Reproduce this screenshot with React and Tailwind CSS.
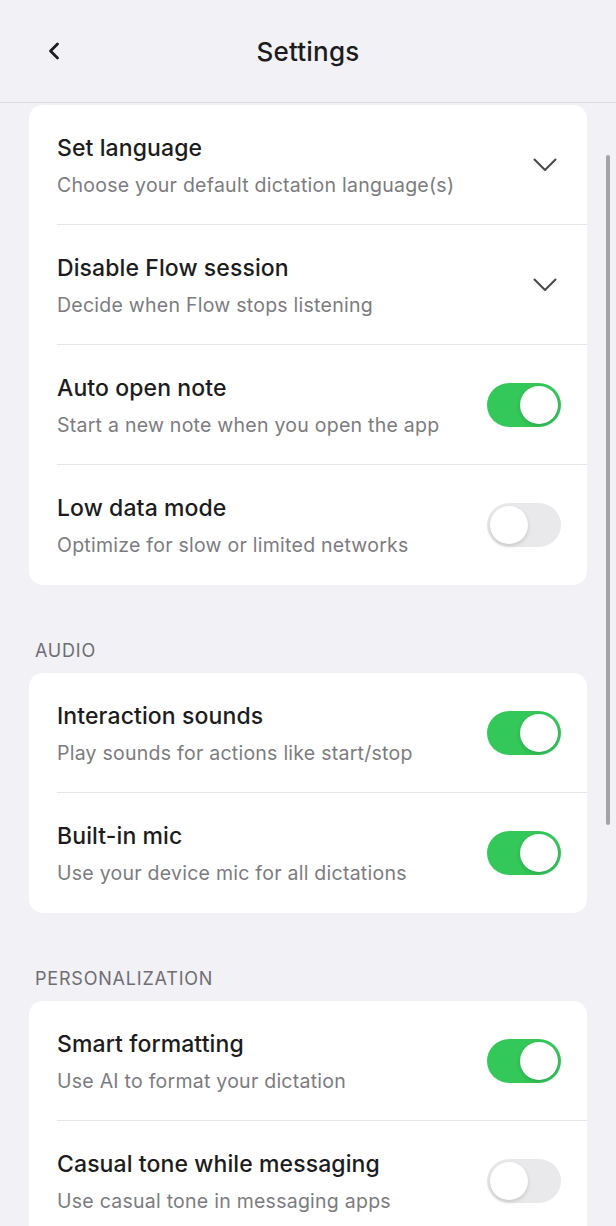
import { ChevronLeft } from 'lucide-react'

const general = [
  { title: 'Set language', sub: 'Choose your default dictation language(s)', kind: 'select' },
  { title: 'Disable Flow session', sub: 'Decide when Flow stops listening', kind: 'select' },
  { title: 'Auto open note', sub: 'Start a new note when you open the app', kind: 'toggle', on: true },
  { title: 'Low data mode', sub: 'Optimize for slow or limited networks', kind: 'toggle', on: false },
]

const audio = [
  { title: 'Interaction sounds', sub: 'Play sounds for actions like start/stop', kind: 'toggle', on: true },
  { title: 'Built-in mic', sub: 'Use your device mic for all dictations', kind: 'toggle', on: true },
]

const personalization = [
  { title: 'Smart formatting', sub: 'Use AI to format your dictation', kind: 'toggle', on: true },
  { title: 'Casual tone while messaging', sub: 'Use casual tone in messaging apps', kind: 'toggle', on: false },
]

function Toggle({ on }) {
  return (
    <div
      className={`w-[74px] h-[44px] rounded-full p-[3px] flex items-center ${
        on ? 'bg-[#34c759] justify-end' : 'bg-[#e9e9eb] justify-start'
      }`}
    >
      <div className="w-[38px] h-[38px] rounded-full bg-white shadow-[0_2px_4px_rgba(0,0,0,0.15)]" />
    </div>
  )
}

function Chevron() {
  return (
    <svg width="24" height="14" viewBox="0 0 24 14" fill="none" className="mr-[4px]">
      <polyline points="1.5,1.5 12,12 22.5,1.5" stroke="#48484a" strokeWidth="2" strokeLinecap="round" strokeLinejoin="round" />
    </svg>
  )
}

function Row({ item, last }) {
  return (
    <div className="pl-[28px]">
      <div
        className={`h-[120px] flex items-center justify-between pr-[26px] ${
          last ? '' : 'border-b border-[#e6e6ea]'
        }`}
      >
        <div className="flex flex-col gap-[10px] pt-[2px]">
          <span className="text-[23px] leading-[28px] font-medium text-[#1c1c1e] tracking-[0.1px]">
            {item.title}
          </span>
          <span className="text-[19.5px] leading-[26px] text-[#7c7c80] tracking-[0.25px]">{item.sub}</span>
        </div>
        {item.kind === 'select' ? <Chevron /> : <Toggle on={item.on} />}
      </div>
    </div>
  )
}

function Card({ items }) {
  return (
    <div className="bg-white rounded-[14px] overflow-hidden">
      {items.map((item, i) => (
        <Row key={i} item={item} last={i === items.length - 1} />
      ))}
    </div>
  )
}

function SectionLabel({ children }) {
  return (
    <div className="pl-[6px] pt-[54px] pb-[10px] text-[18px] leading-[24px] text-[#6e6e73] uppercase tracking-[0.8px]">
      {children}
    </div>
  )
}

export default function App() {
  return (
    <div
      className="w-[616px] h-[1226px] bg-[#f2f1f6] overflow-hidden relative"
      style={{ fontFamily: 'Inter, "Noto Sans", sans-serif' }}
    >
      {/* Header */}
      <div className="h-[103px] border-b border-[#dcdce0] flex items-center relative">
        <ChevronLeft className="absolute left-[40px] w-[28px] h-[28px] text-[#1c1c1e]" strokeWidth={2.4} />
        <h1 className="w-full text-center text-[26px] font-medium text-[#1c1c1e] tracking-[0.2px]">Settings</h1>
      </div>

      {/* Scrollbar */}
      <div className="absolute right-[6px] top-[155px] w-[4px] h-[670px] rounded-full bg-[#a3a3a8]" />

      {/* Content */}
      <div className="px-[29px] pt-[2px]">
        <Card items={general} />
        <SectionLabel>Audio</SectionLabel>
        <Card items={audio} />
        <SectionLabel>Personalization</SectionLabel>
        <Card items={personalization} />
      </div>
    </div>
  )
}
